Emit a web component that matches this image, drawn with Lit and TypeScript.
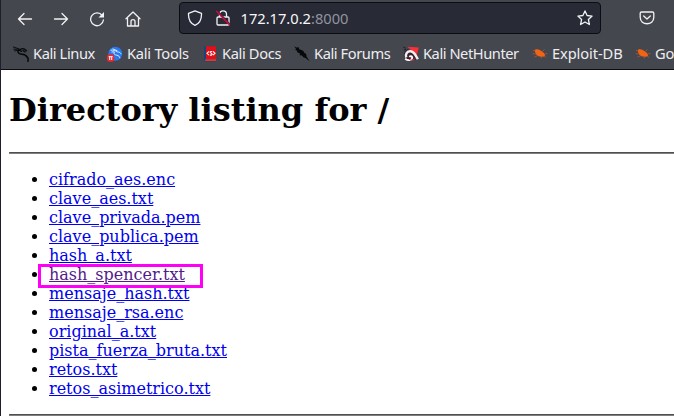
import { LitElement, html, svg, css } from "lit";
import { customElement } from "lit/decorators.js";
import { styleMap } from "lit/directives/style-map.js";

const dragon = svg`<g fill="none" stroke="#07080b" stroke-linecap="round" stroke-linejoin="round"><path d="M.4 1 4 2.200 7.500 3.500M.8 3.200 4 3.300M1.500 5 5 4.200" stroke-width=".9"/><path d="M5.500 3.500C4 6.800 6 8.200 9 8.300c3 .1 4.500 1.500 5.500 3.200M13.500 10.500l1.700 2-.3 2.800" stroke-width="1.500"/><path d="M7.500 3.500c2-1.500 4-.8 6 1.200M6 4.200 8.500 5.300M10 4.500l2 1.400" stroke-width="1.300"/></g>`;

const bug = svg`<path fill="#f06414" d="M3.200 3.600C5.500 2.600 7.500 3.700 9 4.800c1.800 1.200 3.300 2.300 4 4 .3 1.300-.8 1.800-2.200 1.900-2.800.3-5.200-.4-6.500-2.100C3.200 7.200 2.600 5.300 3.200 3.600z"/><path d="M3.200 5 1 4.300M4 8 .8 7.700M5.500 9.700 2.500 11M9 10.500l.5 2M10.500 5.500l1.800-2M12.800 8l2.700-.5M12.500 10l1.500 1.700" fill="none" stroke="#b65630" stroke-width=".8"/>`;

const bookmarks = [
  { text: "Kali Linux", width: 94, tracking: -0.41, icon: dragon },
  {
    text: "Kali Tools",
    width: 95,
    tracking: -0.25,
    icon: svg`<circle cx="8.300" cy="7.700" r="7" fill="#2878ee"/><path d="M3.500 4.200c2.500-.3 5 .2 7 1.800 2-.2 3 .8 3.500 2.200M7.300 6c-1 2 .5 3 2.500 3.200 2 .3 3 1.500 3 3M4.500 6l3-.2M5.500 2.800l5 2" fill="none" stroke="#d8e9ff"/><rect y="8.300" width="7.300" height="7.500" rx="2.500" fill="#e82832"/><path d="M1.700 10.700h4M2.700 10.700v3.300M4.700 10.700v3.300" stroke="#fff" fill="none"/>`,
  },
  {
    text: "Kali Docs",
    width: 92,
    tracking: -0.36,
    icon: svg`<path fill="#17427e" d="M2.200.3h2.500v15H2.200z"/><path fill="#df1018" d="M4 .3h10v13.500H4z"/><path fill="#b9a9b4" d="M3 13.800h11v.8H3z"/><path fill="#a4141c" d="M3 14.600h11v.9H3z"/><path d="m7 5.400-2 1.900L7 9.200M11 5.400l2 1.900-2 1.900M10.200 5.700c-2-.8-2.700.6-1.300 1.300 2 .8 1.300 2.800-1 1.900" fill="none" stroke="#fff" stroke-width="1.100"/>`,
  },
  {
    text: "Kali Forums",
    width: 109,
    tracking: -0.43,
    icon: svg`<path fill="#07080b" d="m0 .2 3 1.600L4.200.8l1.200 2.400 3.800 1.600 1 1.900 2 1.300.3 2.500 3.300 5-4.200-3.500-2.300-.7-1.200-1.800-2.500-.3.5-1.600-2.500-1.200-.8-1.900L1 3.800l1.200-.7z"/>`,
  },
  {
    text: "Kali NetHunter",
    width: 129,
    tracking: -0.45,
    icon: svg`<path fill="#fa3038" d="m4.500.8 11.300.7-2.500 9.700L9 5z"/><path d="M1.500 5.500 4.500 3 11 6.500l3 7.300H4.500L.8 10z" fill="#35232d"/><path d="M3.300 11.500C2 8 4.200 5 7.500 5.200c3.500.2 4.800 3.300 7.300 8" fill="none" stroke="#f4eef0" stroke-width="2.400"/><path d="M2.200 12.800C5 15 9 14.500 9.300 11.500c-.4-1.600-2.200-1.500-3-.7" fill="none" stroke="#fff" stroke-width="1.800"/><path d="M6 13.300c2.500 1.500 5 1 6.200-1" fill="none" stroke="#ee3448"/><path d="m.5 1 2 1.200M.8 4l2-.7" stroke="#17191d"/>`,
  },
  { text: "Exploit-DB", width: 103, tracking: -0.1, icon: bug },
  { text: "Google Hacking DB", width: 150, tracking: -0.2, icon: bug },
];

const files = [
  "cifrado_aes.enc",
  "clave_aes.txt",
  "clave_privada.pem",
  "clave_publica.pem",
  "hash_a.txt",
  "hash_spencer.txt",
  "mensaje_hash.txt",
  "mensaje_rsa.enc",
  "original_a.txt",
  "pista_fuerza_bruta.txt",
  "retos.txt",
  "retos_asimetrico.txt",
];

@customElement("app-root")
export class AppRoot extends LitElement {
  static styles = css`
    :host { display: block; height: 416px; overflow: hidden; background: #fff; }
    .window { box-sizing: border-box; height: 416px; border-left: 1px solid #1e1f2c; overflow: hidden; }
    .chrome { box-sizing: border-box; height: 70px; background: #45474f; border-bottom: 1px solid #0c0c12; color: #eeeef0; font-family: "Noto Sans", sans-serif; }
    .toolbar { display: flex; height: 38px; box-sizing: border-box; padding-top: 2px; }
    .nav { display: flex; gap: 20px; padding: 9px 0 0 16px; width: 162px; }
    svg { display: block; width: 16px; height: 16px; flex: none; }
    .line { fill: none; stroke: #f2f2f4; stroke-width: 1.300; stroke-linecap: round; stroke-linejoin: round; }
    .address { box-sizing: border-box; width: 422px; height: 32px; border: 1px solid #0c0c14; border-radius: 4px; background: #282a36; display: flex; align-items: center; padding: 0 7px; }
    .address .lock { margin-left: 12px; }
    .url { flex: 1; margin-left: 9.500px; font-size: 14.667px; line-height: 20px; color: #f7f7f9; }
    .port { color: #9293a0; }
    .pocket { margin: 8px 0 0 37.500px; }
    .bookmarks { display: flex; height: 31px; align-items: center; padding-left: 12px; white-space: nowrap; font-size: 14.667px; line-height: 20px; }
    .bookmark { display: flex; align-items: center; gap: 4px; flex: none; }
    .label { padding-bottom: 2px; }
    .page { padding: 21px 0 0 8px; font: 16px/19px "DejaVu Serif", serif; color: #000; }
    h1 { font-size: 32px; line-height: 38px; margin: 0 0 23px; }
    hr { height: 2px; box-sizing: border-box; border: 1px solid #808080; border-top-color: #4f4f4f; border-right: 0; margin: 0; }
    ul { margin: 16px 0; padding-left: 40px; }
    a { color: #0000ee; text-decoration: underline; }
    .visited { color: #551a8b; }
    .marked { position: relative; }
    .marker { position: absolute; left: -11px; top: -1px; width: 165px; height: 24px; box-sizing: border-box; border: 3px solid #ff00f6; }
  `;

  render() {
    return html`<div class="window">
      <header class="chrome">
        <div class="toolbar">
          <nav class="nav">
            <svg viewBox="0 0 16 16"><path class="line" d="M14.500 8H1.500M7 2.500 1.500 8 7 13.500"/></svg>
            <svg viewBox="0 0 16 16"><path class="line" d="M1.500 8h13M9 2.500 14.500 8 9 13.500"/></svg>
            <svg viewBox="0 0 16 16"><path class="line" d="M13.200 4.500A6.400 6.400 0 1 0 14.400 9"/><path fill="#f2f2f4" d="M15 1v5.500H9.500z"/></svg>
            <svg viewBox="0 0 16 16"><path class="line" d="M1 7.800 8 1l7 6.800M2.500 7v8h11V7M6 15v-4.500c0-2.500 4-2.500 4 0V15"/></svg>
          </nav>
          <div class="address">
            <svg viewBox="0 0 16 16"><path class="line" d="m8 .8 6.500 2.500c.2 5-1.500 10-6.500 12-5-2-6.700-7-6.500-12z"/></svg>
            <svg class="lock" viewBox="0 0 16 16"><path class="line" d="M4.500 7V4.300C4.500-.2 11.500-.2 11.500 4.300V7M3 7h10c.7 0 1 .3 1 1v6c0 .7-.3 1-1 1H3c-.7 0-1-.3-1-1V8c0-.7.3-1 1-1z"/><path d="m2 .5 13 14" stroke="#282a36" stroke-width="1.500"/><path d="m1.300 1 13.400 14" stroke="#e5003d" stroke-width="1.400"/></svg>
            <span class="url">172.17.0.2<span class="port">:8000</span></span>
            <svg viewBox="0 0 16 16"><path class="line" d="m8 .9 2.100 4.600 5 .6-3.700 3.400 1 5L8 12l-4.400 2.500 1-5L.9 6.100l5-.6z"/></svg>
          </div>
          <svg class="pocket" viewBox="0 0 16 16"><path class="line" d="M2.500 2h11c.8 0 1.300.5 1.300 1.300v4c0 8.600-13.600 8.600-13.600 0v-4C1.200 2.500 1.700 2 2.500 2zM4.700 6 8 9l3.300-3"/></svg>
        </div>
        <div class="bookmarks">${bookmarks.map((b) => html`<span class="bookmark" style=${styleMap({ width: `${b.width}px`, letterSpacing: `${b.tracking}px` })}><svg viewBox="0 0 16 16">${b.icon}</svg><span class="label">${b.text}</span></span>`)}</div>
      </header>
      <main class="page">
        <h1>Directory listing for /</h1>
        <hr>
        <ul>${files.map((f) => f === "hash_spencer.txt"
          ? html`<li class="marked"><a class="visited" href="#">${f}</a><span class="marker"></span></li>`
          : html`<li><a href="#">${f}</a></li>`)}</ul>
        <hr>
      </main>
    </div>`;
  }
}
